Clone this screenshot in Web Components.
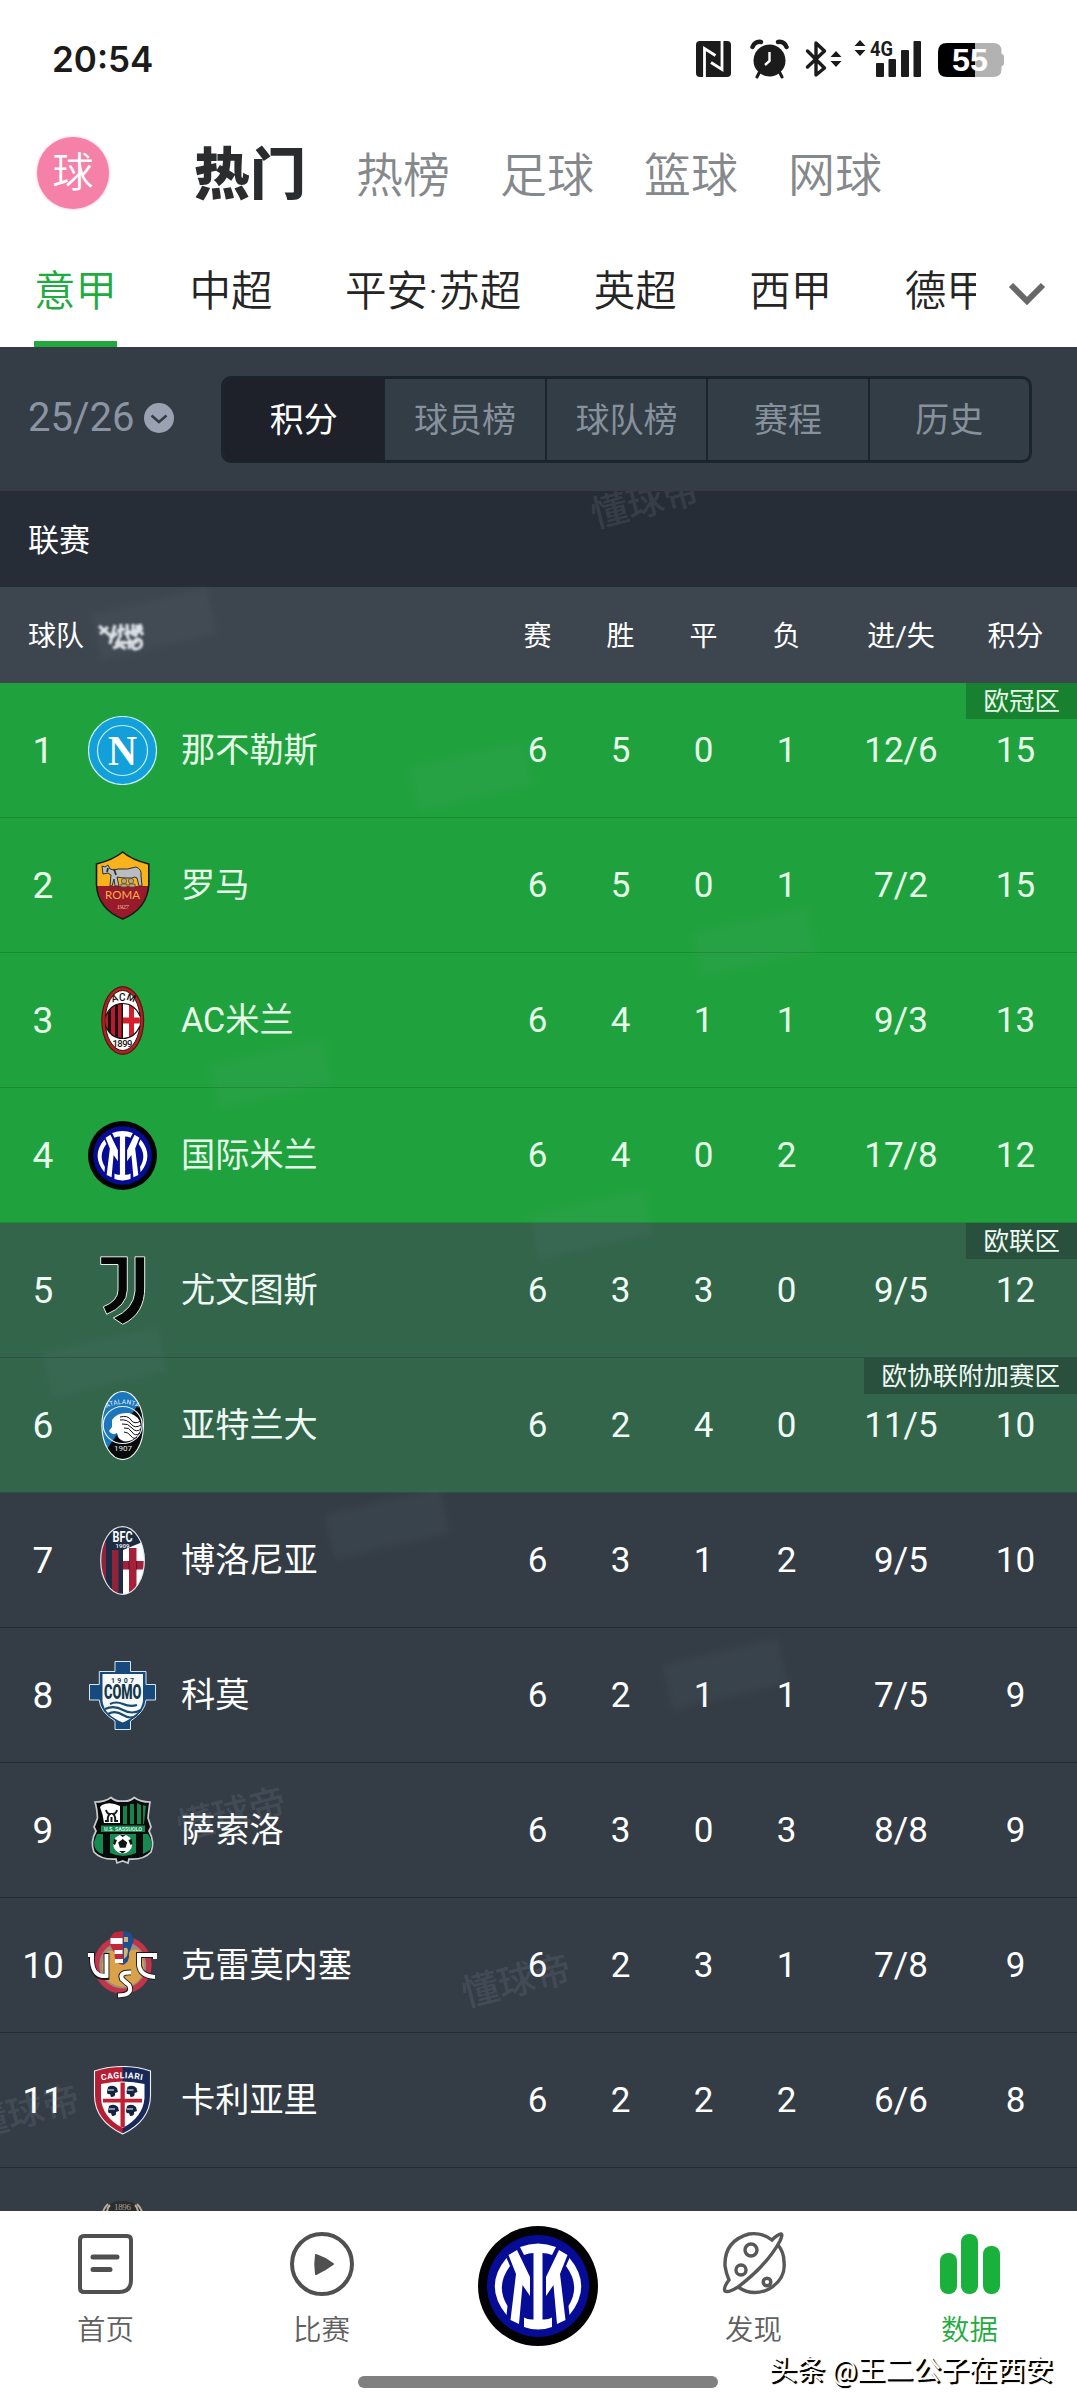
<!DOCTYPE html>
<html lang="zh-CN">
<head>
<meta charset="UTF-8">
<title>数据</title>
<style>
  body {
    margin: 0;
    background: #fff;
    font-family: Roboto, "Noto Sans CJK SC", sans-serif;
  }
</style>
</head>
<body>
<score-app></score-app>

<script>
  const INTER = `
    <circle cx="60" cy="60" r="60" fill="#020204"/>
    <circle cx="60" cy="60" r="51" fill="#070c96"/>
    <g fill="#fff">
      <path d="M42 21Q60 14 78 21L74 29Q69 27 64.5 27V93.500Q70 94 74 91.500V101Q60 106 46 101V91.500Q50 94 55.500 93.500V27Q51 27 46 29Z"/>
      <path d="M30.500 29L39 24L52 51V70L44.500 59L41 98L32.500 94L38 48Z"/>
      <path d="M89.500 29L81 24L68 51V70L75.500 59L79 98L87.500 94L82 48Z"/>
      <path d="M28.500 32Q5 60 28.500 89L29.500 80Q17 60 32 40Z"/>
      <path d="M91.500 32Q115 60 91.500 89L90.500 80Q103 60 88 40Z"/>
    </g>`;

  const CRESTS = {
    napoli: `
      <circle cx="34.500" cy="34.500" r="34" fill="#129fda" stroke="#c4f3f4" stroke-width="1.200"/>
      <circle cx="34.500" cy="34.500" r="25" fill="none" stroke="#c4f3f4" stroke-width="1.200"/>
      <text x="20" y="48.500" font-family="Liberation Serif" font-weight="700" font-size="43" textLength="29" lengthAdjust="spacingAndGlyphs" fill="#fff">N</text>`,
    roma: `
      <defs><clipPath id="s"><path d="M34.700 1Q25 9 8.500 13V34Q10 58 34.700 68Q59 58 60.800 34V13Q44 9 34.700 1Z"/></clipPath></defs>
      <g clip-path="url(#s)">
        <path fill="#f8b21c" d="M0 0H69V35H0Z"/><path fill="#981b2c" d="M0 35H69V69H0Z"/>
      </g>
      <path d="M34.700 1Q25 9 8.500 13V34Q10 58 34.700 68Q59 58 60.800 34V13Q44 9 34.700 1Z" fill="none" stroke="#1b1a10" stroke-width="1.600"/>
      <path d="M14 15L17 16L20 14L22 18Q26 20 30 18Q40 19 48 16Q54 18 53 25L54 35H51L49 27Q47 25 44 27L39 27Q33 27 29 26L31 35H27L26 28L24 35H22L23 24L20 22L15 23Z" fill="#b9bcc0" stroke="#2b2f35" stroke-width="1"/>
      <path d="M26 18L28 24M20 17L19 21" stroke="#2b2f35" stroke-width="1.800"/>
      <g fill="#b9a98b" stroke="#57472f" stroke-width=".8"><circle cx="36" cy="30" r="2.600"/><circle cx="43" cy="30" r="2.600"/><path d="M33 33h6v3h-6zM41 33h6v3h-6z"/></g>
      <text x="17" y="48" font-family="Lato" font-size="10.500" textLength="35" lengthAdjust="spacingAndGlyphs" fill="#f9b04a">ROMA</text>
      <text x="28.500" y="58" font-family="Liberation Serif" font-size="7" textLength="12.500" fill="#f0b9a0">1927</text>`,
    milan: `
      <ellipse cx="34.700" cy="34.500" rx="21.500" ry="34.500" fill="#4f1712"/>
      <ellipse cx="34.700" cy="34.500" rx="20.300" ry="33.200" fill="#b3201f"/>
      <ellipse cx="34.700" cy="34.500" rx="17.500" ry="30" fill="#fff" stroke="#2b1512"/>
      <defs><clipPath id="s"><ellipse cx="34.700" cy="35" rx="17.300" ry="17.500"/></clipPath></defs>
      <g clip-path="url(#s)">
        <path fill="#1c1012" d="M15 15H35V55H15Z"/>
        <path fill="#b41e2c" d="M17 15h3v40h-3zM23 15h4v40h-4zM30 15h3.500v40h-3.500z"/>
        <path fill="#fff" d="M35 15H55V55H35Z"/>
        <path fill="#d31f2c" d="M41 15h5v40h-5zM35 31.500h20v6h-20z"/>
      </g>
      <path d="M17.500 30Q23 17.500 34.700 17.500T52 30M17.500 40Q23 52.500 34.700 52.500T52 40" fill="none" stroke="#16100f" stroke-width="1.200"/>
      <g font-family="Roboto" font-weight="500" fill="#16100f">
        <text font-size="10" transform="translate(24.500 16.500) rotate(-20)">A</text>
        <text x="31" y="14.500" font-size="10">C</text>
        <text font-size="10" transform="translate(38 13.500) rotate(20)">M</text>
        <text font-size="9.500" x="24.500" y="60.500" textLength="20">1899</text>
      </g>`,
    inter: `<g transform="scale(.575)">${INTER}</g>`,
    juventus: `
      <g fill="#050706" stroke="#e8f2ec" stroke-width="1">
        <path d="M12.700 .800H39.300V34Q39 50 18.700 58.300L15.300 50.700Q30 45 30 34V8.500H12.700Z"/>
        <path d="M47 .800H56.700V31Q57 58 34.700 68.300L25.300 62Q46 53 47 35Z"/>
      </g>`,
    atalanta: `
      <defs><clipPath id="s"><ellipse cx="34.700" cy="34.500" rx="21" ry="34"/></clipPath></defs>
      <g clip-path="url(#s)">
        <path fill="#1b76bb" d="M0 0H69V69H0Z"/><path fill="#08090b" d="M50 14L16 62V69H69V14Z"/>
      </g>
      <ellipse cx="34.700" cy="34.500" rx="20.800" ry="34" fill="none" stroke="#f2faf8" stroke-width="1.100"/>
      <ellipse cx="34.700" cy="34" rx="19.500" ry="18.500" fill="none" stroke="#e6f4fa" stroke-width="1.200"/>
      <path d="M24 29Q29 21 41 22Q52 25 53 35Q52 45 44 49Q35 53 30 46L29 42Q24 45 21 40L24 36Z" fill="#fff"/>
      <path d="M32 26Q40 24 43 29T53 30M32 29Q39 28 43 33T53 34M34 33Q40 32 44 37T53 38M36 37Q41 36 44 41T52 42M36 41Q40 41 43 45T49 46" fill="none" stroke="#111" stroke-width="1"/>
      <defs><path id="arc" d="M18.500 17Q34.700 9 51 17"/></defs>
      <text font-family="Roboto" font-size="6.500" fill="#e6f4fa"><textPath href="#arc" textLength="33">ATALANTA</textPath></text>
      <text x="26" y="60" font-family="Roboto" font-size="8" textLength="18" fill="#e8e8e8">1907</text>`,
    bologna: `
      <defs><clipPath id="s"><ellipse cx="34.500" cy="34.500" rx="22" ry="34"/></clipPath></defs>
      <g clip-path="url(#s)">
        <path fill="#1d2c42" d="M0 0H69V69H0Z"/>
        <path fill="#8f2339" d="M13 16h5v53h-5zM24 24h6.500v45h-6.500z"/>
        <path fill="#fff" d="M35 24L57 15V69H35Z"/>
        <path fill="#a52139" d="M41 22h7.500v47h-7.500zM35 35h22v8.500h-22z"/>
        <path d="M41 35v8.500M48.500 35v8.500" stroke="#3d1523" stroke-width=".8"/>
      </g>
      <ellipse cx="34.500" cy="34.500" rx="21.800" ry="33.900" fill="none" stroke="#dfe7ed" stroke-width="1.200"/>
      <text x="24.500" y="15.500" font-family="Roboto" font-weight="700" font-size="14" textLength="20" lengthAdjust="spacingAndGlyphs" fill="#fff">BFC</text>
      <text x="27.500" y="21.500" font-family="Roboto" font-weight="500" font-size="6" textLength="14" fill="#fff">1909</text>`,
    como: `
      <g fill="#174a7c" stroke="#d5e6ef" stroke-width="1">
        <path d="M27 .500H42.500V10.500H58V23.500H67.500V39H58Q57 51 42.500 60V68.500H27V60Q12 51 11.300 39H1.500V23.500H11.300V10.500H27Z"/>
      </g>
      <path d="M14.500 13H55V40Q53 54 34.700 61.500Q16 54 14.500 40Z" fill="#f6fafb"/>
      <text x="23" y="21.500" font-family="Roboto" font-weight="700" font-size="7" textLength="23" fill="#22384e">1907</text>
      <text x="16" y="38" font-family="Roboto" font-weight="900" font-size="19.500" textLength="37.500" lengthAdjust="spacingAndGlyphs" fill="#17384c">COMO</text>
      <path d="M22 43Q28 40 35 43T49 44M17 48Q26 44 35 49T53 49M20 53Q27 49 35 54T49 54" fill="none" stroke="#174a6c" stroke-width="2.200"/>`,
    sassuolo: `
      <path d="M7 6Q17 6 23 1.500Q28 6 34.700 5Q41 6 46.300 1.500Q52 6 62 6Q61 12 60 22L63 31L61 35Q67 46 63 56Q56 64 41 63L40 67L34.700 65L29 67L28 63Q13 64 6 56Q2 46 8 35L6 31L9.500 22Q9 12 7 6Z" fill="#080b0a" stroke="#c8ccd0" stroke-width="1.700"/>
      <path fill="#fff" d="M14 9Q22 5 32 10V27H16Q15 18 12 11Z"/>
      <path d="M18 14q1 4 4 4q-3 2-2 8M29 14q-1 4-4 4q3 2 2 8M17 25h3M27 25h3M23.500 21v5" fill="none" stroke="#15191a" stroke-width="2"/>
      <path fill="#15834e" d="M35 10q3 1 4-1v19h-4zM42 8h4v20h-4zM49 7l4 2v19h-4zM55 9l3 1-2 18h-1z"/>
      <path fill="#168a51" d="M13 29.500H57V36H13ZM22 38H48V57Q35 63 22 57ZM9 38h6v20Q6 56 6 46ZM55 38h5q6 9 2 16l-7 4z"/>
      <text x="16" y="35" font-family="Roboto" font-weight="700" font-size="5.500" textLength="38" fill="#d9f0e2">U.S. SASSUOLO</text>
      <circle cx="34.700" cy="48" r="9.500" fill="#fff"/>
      <path fill="#101412" d="M34.700 43l4.500 3.500-1.700 5.300h-5.600l-1.700-5.300zM26 43l3 1-2 5-2-1zM43.500 43l-3 1 2 5 2-1zM31 55l7 0-3.500 2.500zM32 39h5.500l-2.700 2z"/>`,
    cremonese: `
      <circle cx="34.700" cy="34" r="29" fill="#c2344a"/>
      <circle cx="34.700" cy="34" r="23.500" fill="#9f8a80"/>
      <path d="M20 20Q29 18 34.700 30Q41 16 50 19Q62 36 50 50Q34 62 19 49Q9 34 20 20Z" fill="#d9a24a"/>
      <path d="M26 1.500L35 0V34Q26 33 26.500 22L22.500 15V6Z" fill="#c2283c"/>
      <path d="M22.500 7h12v6h-12zM26.500 19h8v4h-8zM27 28h8v4h-8z" fill="#fff"/>
      <path d="M35 0L43 2L46 9L41 22Q42 31 35 34Z" fill="#1c4e91"/>
      <path d="M36 6h4v5h-4zM36 17q6-2 3 8l-3 3z" fill="#cbb573"/>
      <g fill="none" stroke="#171717" stroke-width="5.800">
        <path d="M0 24H4V30Q5 47 18.500 46V22M67 28V24H51V34Q52 45 67 46M43 41.500Q31 41 34 48Q37 51 41 54Q46 64 29 64.500"/>
      </g>
      <g fill="none" stroke="#fff" stroke-width="4">
        <path d="M0 24H4V30Q5 46 18.500 45V23M67 28V24H51V34Q52 45 67 46M43 41.500Q31 41 34 48Q37 51 41 54Q46 64 30 64.500"/>
      </g>`,
    cagliari: `
      <defs><clipPath id="s"><path d="M6.500 5Q20 .500 34.700 .500T62.500 5V30Q62 55 34.700 68Q7 55 6.500 30Z"/></clipPath></defs>
      <g clip-path="url(#s)"><path fill="#b51f36" d="M0 0H35V69H0Z"/><path fill="#16295a" d="M34.700 0H69V69H34.700Z"/></g>
      <path d="M6.500 5Q20 .500 34.700 .500T62.500 5V30Q62 55 34.700 68Q7 55 6.500 30Z" fill="none" stroke="#f1f3f4" stroke-width="1.100"/>
      <path d="M13 18Q34.700 13 56.500 18V32Q55 51 34.700 62Q14 51 13 32Z" fill="#fff"/>
      <path d="M32.500 16.500h4.300v45h-4.300zM15 32.700h39v3.800h-39z" fill="#c11f33"/>
      <g fill="#14233f">
        <path id="m" d="M20 21q5-3 9 1l1 4-3 1q1 4-4 4l-1-3q-3 1-3-2zM20 23l8-1"/>
        <use href="#m" x="19.500"/><use href="#m" x="1" y="19"/><use href="#m" x="19" y="19"/>
      </g>
      <path d="M20 24h6M39.500 24h6M21 43h6M39 43h6" stroke="#fff" stroke-width="1"/>
      <defs><path id="arc" d="M13.500 14.500Q34.700 10 56 14.500"/></defs>
      <text font-family="Roboto" font-weight="700" font-size="8.500" fill="#fff"><textPath href="#arc" textLength="41">CAGLIARI</textPath></text>`,
    udinese: `
      <ellipse cx="34.500" cy="18" rx="23" ry="18" fill="#2a2c2d"/>
      <path d="M15 11q1-4 5-8M19 11q0-4 3-7M54 11q-1-4-5-8M50 11q0-4-3-7" stroke="#b9ab98" stroke-width="2" fill="none"/>
      <text x="26" y="8.500" font-family="Liberation Serif" font-size="9" textLength="17" fill="#a59e92">1896</text>`
  };

  class TeamCrest extends HTMLElement {
    constructor() {
      super();
      this.attachShadow({ mode: "open" });
    }

    connectedCallback() {
      const team = this.getAttribute("team");
      this.shadowRoot.innerHTML = `
        <style>
          :host { display: block; width: 69px; height: 69px; }
          svg { display: block; width: 100%; height: 100%; }
        </style>
        <svg viewBox="0 0 69 69">${CRESTS[team] || ""}</svg>
      `;
    }
  }

  class StatusBar extends HTMLElement {
    constructor() {
      super();
      this.attachShadow({ mode: "open" });
    }

    connectedCallback() {
      this.shadowRoot.innerHTML = `
        <style>
          :host {
            display: flex;
            justify-content: space-between;
            align-items: center;
            height: 118px;
            padding: 0 72px 0 52px;
            box-sizing: border-box;
          }
          time {
            font: 600 35px/1 Inter, sans-serif;
            color: #1b1b1b;
          }
          svg { display: block; overflow: visible; }
        </style>
        <time>20:54</time>
        <svg width="310" height="50" viewBox="695 34 310 50" fill="#1b1b1b">
          <rect x="696" y="41" width="35" height="36" rx="4"/>
          <path d="M704.500 77V48.500L715.500 55.500M722 41V69.500L711 62.500" fill="none" stroke="#fff" stroke-width="2.800"/>

          <circle cx="769.500" cy="60.500" r="16"/>
          <path d="M752.500 47Q755 41 761 42M786.500 47Q784 41 778 42" fill="none" stroke="#1b1b1b" stroke-width="4.500" stroke-linecap="round"/>
          <path d="M759 73l-2 4M780 73l2 4" stroke="#1b1b1b" stroke-width="3" stroke-linecap="round"/>
          <path d="M769.500 52V61L765 65" fill="none" stroke="#fff" stroke-width="2.400"/>

          <path d="M807.500 51L824.500 68L816 75V43L824.500 51L807.500 67" fill="none" stroke="#1b1b1b" stroke-width="3.400" stroke-linejoin="round" stroke-linecap="round"/>
          <path d="M836 51l5.500 6h-11zM836 67l5.500-6h-11z"/>
          <path d="M860 40l5.500 6h-11zM860 56l5.500-6h-11z"/>
          <text x="870" y="56" font-family="Roboto" font-weight="700" font-size="20" textLength="23" lengthAdjust="spacingAndGlyphs">4G</text>
          <rect x="876" y="63" width="8" height="14" rx="1"/>
          <rect x="888.500" y="59" width="7.500" height="18" rx="1"/>
          <rect x="901" y="50" width="8" height="27" rx="1"/>
          <rect x="913.500" y="41" width="7.500" height="36" rx="1"/>

          <path d="M975 43H993Q1001.500 43 1001.500 51V54Q1004 54 1004 57V63Q1004 66 1001.500 66V69Q1001.500 77 993 77H975Z" fill="#b2b2b2"/>
          <path d="M975 43H947Q938 43 938 52V68Q938 77 947 77H975Z" fill="#000"/>
          <text x="952" y="71" font-family="Liberation Sans" font-weight="700" font-size="30.500" textLength="36" lengthAdjust="spacingAndGlyphs" fill="#fff">55</text>
        </svg>
      `;
    }
  }

  class ChannelNav extends HTMLElement {
    constructor() {
      super();
      this.attachShadow({ mode: "open" });
    }

    connectedCallback() {
      this.shadowRoot.innerHTML = `
        <style>
          :host {
            display: flex;
            align-items: center;
            height: 110px;
            padding-left: 37px;
          }
          .avatar {
            width: 72px;
            height: 72px;
            margin-right: 85px;
            border-radius: 50%;
            background: #f681a8;
            box-shadow: 0 0 3px #f9b5cb;
            color: #fff;
            font-size: 41px;
            font-weight: 350;
            line-height: 73px;
            text-align: center;
          }
          nav {
            display: flex;
            align-items: center;
            gap: 50px;
            padding-top: 4px;
            font-size: 47px;
            font-weight: 350;
            line-height: 1;
            color: #85898c;
          }
          b {
            font-size: 56px;
            font-weight: 900;
            color: #2b2c2e;
          }
        </style>
        <div class="avatar">球</div>
        <nav><b>热门</b><span>热榜</span><span>足球</span><span>篮球</span><span>网球</span></nav>
      `;
    }
  }

  class LeagueTabs extends HTMLElement {
    constructor() {
      super();
      this.attachShadow({ mode: "open" });
    }

    connectedCallback() {
      const items = this.getAttribute("items").split(",");
      this.shadowRoot.innerHTML = `
        <style>
          :host {
            display: flex;
            align-items: stretch;
            height: 119px;
            padding-left: 34px;
          }
          .list {
            display: flex;
            flex: none;
            gap: 72.500px;
            width: 942px;
            overflow: hidden;
            white-space: nowrap;
            font-size: 41.500px;
            font-weight: 350;
            line-height: 128px;
            color: #252525;
          }
          span { flex: none; height: 113px; }
          .active {
            color: #1fab40;
            border-bottom: 6px solid #22a83f;
          }
          svg { margin: 50px 0 0 31px; }
        </style>
        <div class="list">
          ${items.map((t, i) => `<span class="${i === 0 ? "active" : ""}">${t}</span>`).join("")}
        </div>
        <svg width="40" height="30" viewBox="0 0 40 30"><path d="M4 7L20 23L36 7" fill="none" stroke="#686868" stroke-width="6"/></svg>
      `;
    }
  }

  class FilterBar extends HTMLElement {
    constructor() {
      super();
      this.attachShadow({ mode: "open" });
    }

    connectedCallback() {
      const items = this.getAttribute("items").split(",");
      this.shadowRoot.innerHTML = `
        <style>
          :host {
            display: flex;
            align-items: center;
            justify-content: space-between;
            height: 144px;
            padding: 0 45px 0 28px;
            background: #343d46;
          }
          .season {
            display: flex;
            align-items: center;
            gap: 10px;
            margin-bottom: 2px;
            font-size: 40px;
            line-height: 1;
            color: #8b94a3;
          }
          .seg {
            display: flex;
            box-sizing: border-box;
            width: 811px;
            height: 87px;
            border: 3px solid #1b242c;
            border-radius: 10px;
            overflow: hidden;
            background: #323d45;
            font-size: 34px;
            line-height: 83px;
            text-align: center;
            color: #86919d;
          }
          .seg span {
            flex: 1;
            border-left: 2px solid #1b242c;
          }
          .seg .active {
            background: #1e2129;
            border: 0;
            color: #fff;
          }
        </style>
        <div class="season">
          <slot></slot>
          <svg width="30" height="30" viewBox="0 0 30 30"><circle cx="15" cy="15" r="15" fill="#9aa1b3"/><path d="M7.500 12.500L15 19L22.500 12.500" fill="none" stroke="#343d46" stroke-width="2.600"/></svg>
        </div>
        <div class="seg">
          ${items.map((t, i) => `<span class="${i === 0 ? "active" : ""}">${t}</span>`).join("")}
        </div>
      `;
    }
  }

  class TeamRow extends HTMLElement {
    constructor() {
      super();
      this.attachShadow({ mode: "open" });
    }

    connectedCallback() {
      const zone = this.getAttribute("zone");
      const stats = (this.getAttribute("stats") || "").split(",");
      this.shadowRoot.innerHTML = `
        <style>
          :host {
            display: grid;
            grid-template-columns: var(--cols);
            align-items: center;
            position: relative;
            box-sizing: border-box;
            height: 135px;
            padding-right: 20px;
            border-bottom: 1px solid #222b33;
            background: #343d46;
            color: #fff;
            font-size: 35px;
            line-height: 1;
            text-align: center;
          }
          :host([level="ucl"]) { background: #1fa23d; border-color: #1a8b35; color: #e6fce9; }
          :host([level="uel"]) { background: #33654b; border-color: #2a503f; color: #effaf4; }
          .rank { font-size: 37px; }
          team-crest { justify-self: center; }
          .name {
            padding: 1px 0 0 22px;
            font-size: 34.200px;
            text-align: left;
          }
          .zone {
            position: absolute;
            top: 0;
            right: 0;
            padding: 1px 17px 0;
            background: rgba(0, 0, 0, .2);
            font-size: 25.500px;
            line-height: 35px;
          }
        </style>
        <span class="rank">${this.getAttribute("rank") || ""}</span>
        <team-crest team="${this.getAttribute("crest")}"></team-crest>
        <span class="name">${this.getAttribute("name") || ""}</span>
        ${stats.map(s => `<span>${s}</span>`).join("")}
        ${zone ? `<div class="zone">${zone}</div>` : ""}
      `;
    }
  }

  const TEAMS = [
    ["napoli", "那不勒斯", "6,5,0,1,12/6,15", "ucl", "欧冠区"],
    ["roma", "罗马", "6,5,0,1,7/2,15", "ucl"],
    ["milan", "AC米兰", "6,4,1,1,9/3,13", "ucl"],
    ["inter", "国际米兰", "6,4,0,2,17/8,12", "ucl"],
    ["juventus", "尤文图斯", "6,3,3,0,9/5,12", "uel", "欧联区"],
    ["atalanta", "亚特兰大", "6,2,4,0,11/5,10", "uel", "欧协联附加赛区"],
    ["bologna", "博洛尼亚", "6,3,1,2,9/5,10"],
    ["como", "科莫", "6,2,1,1,7/5,9"],
    ["sassuolo", "萨索洛", "6,3,0,3,8/8,9"],
    ["cremonese", "克雷莫内塞", "6,2,3,1,7/8,9"],
    ["cagliari", "卡利亚里", "6,2,2,2,6/6,8"]
  ];

  // faint marks printed over the table: [left, top] from the table's corner
  const MARKS = [[590, -7], [176, 1305], [461, 1472], [-30, 1603]];
  const PATCHES = [[95, 110], [412, 262], [695, 428], [212, 560], [532, 710], [46, 848], [328, 1010], [666, 1160]];

  class StandingsTable extends HTMLElement {
    constructor() {
      super();
      this.attachShadow({ mode: "open" });
    }

    connectedCallback() {
      const heads = ["赛", "胜", "平", "负", "进/失", "积分"];
      this.shadowRoot.innerHTML = `
        <style>
          :host {
            --cols: 86px 73px 1fr 83px 83px 83px 83px 146px 83px;
            display: block;
            position: relative;
            height: 1720px;
            overflow: hidden;
            background: #343d46;
          }
          .group {
            height: 96px;
            padding-left: 28px;
            background: #272d36;
            font-size: 31px;
            line-height: 100px;
            color: #fff;
          }
          .head {
            display: grid;
            grid-template-columns: var(--cols);
            align-items: center;
            box-sizing: border-box;
            height: 96px;
            padding: 4px 20px 0 0;
            background: #3d464f;
            font-size: 28px;
            line-height: 1;
            text-align: center;
            color: #fff;
          }
          .team {
            grid-column: 1 / 4;
            display: flex;
            align-items: center;
            gap: 14px;
            padding-left: 28px;
          }
          .mark {
            position: absolute;
            font-size: 37px;
            font-weight: 500;
            line-height: 1;
            color: rgba(170, 180, 190, .15);
            transform: rotate(-14deg);
          }
          .patch {
            position: absolute;
            width: 118px;
            height: 46px;
            background: rgba(130, 140, 150, .07);
            filter: blur(3px);
            transform: rotate(-13deg);
          }
        </style>
        <div class="group">联赛</div>
        <div class="head">
          <div class="team">
            球队
            <svg width="48" height="30" viewBox="0 0 48 30" fill="none" stroke="#e3e8ec" stroke-width="3.200" style="filter: blur(1px)">
              <path d="M1 4L14 15M2 12L10 5M17 3L12 22M12 17L19 11M23 2L22 16M19 9L27 7M29 2L30 17M26 12L45 6M35 2V14M43 2L37 15M38 3L45 13M15 26L26 22M21 16L18 26M26 19Q21 26 28 26M32 17L31 27M37 18Q32 27 38 27Q45 26 43 19Q39 15 36 20M17 21L40 20"/>
            </svg>
          </div>
          ${heads.map(h => `<span>${h}</span>`).join("")}
        </div>
        ${TEAMS.map(([crest, name, stats, level, zone], i) => `
          <team-row rank="${i + 1}" crest="${crest}" name="${name}" stats="${stats}" level="${level || ""}" zone="${zone || ""}"></team-row>
        `).join("")}
        <team-row crest="udinese"></team-row>
        ${PATCHES.map(([x, y]) => `<div class="patch" style="left:${x}px;top:${y}px"></div>`).join("")}
        ${MARKS.map(([x, y]) => `<div class="mark" style="left:${x}px;top:${y}px">懂球帝</div>`).join("")}
      `;
    }
  }

  class TabItem extends HTMLElement {
    constructor() {
      super();
      this.attachShadow({ mode: "open" });
    }

    connectedCallback() {
      this.shadowRoot.innerHTML = `
        <style>
          :host {
            display: flex;
            flex-direction: column;
            align-items: center;
            flex: none;
            width: 216px;
            padding-top: 19px;
            box-sizing: border-box;
            font-size: 28.500px;
            font-weight: 350;
            line-height: 1;
            color: #606060;
          }
          :host([active]) { color: #1fab3e; }
          .label { margin-top: 19px; }
        </style>
        <slot name="icon"></slot>
        <span class="label"><slot></slot></span>
      `;
    }
  }

  class BottomNav extends HTMLElement {
    constructor() {
      super();
      this.attachShadow({ mode: "open" });
    }

    connectedCallback() {
      this.shadowRoot.innerHTML = `
        <style>
          :host {
            display: flex;
            flex-direction: column;
            align-items: center;
            position: relative;
            height: 196px;
            background: #fff;
          }
          .tabs {
            display: flex;
            justify-content: center;
            width: 1077px;
            height: 165px;
            margin-left: -2px;
          }
          .club { flex: none; width: 216px; padding-top: 15px; }
          .club svg { display: block; margin: 0 auto; }
          .bar {
            width: 360px;
            height: 12px;
            margin-left: -1px;
            border-radius: 6px;
            background: #808080;
          }
          .author {
            position: absolute;
            right: 24px;
            top: 146px;
            font-size: 28px;
            line-height: 1;
            white-space: nowrap;
            color: #fff;
            text-shadow: 1.500px 1.500px 0 #000, 2px 2px 1px #000;
          }
        </style>
        <div class="tabs">
          <tab-item>
            <svg slot="icon" width="66" height="68" viewBox="0 0 66 68" fill="none" stroke="#505050" stroke-width="4">
              <path d="M11 6H54Q58 6 58 10V50Q58 62 46 62H11Q7 62 7 58V10Q7 6 11 6Z"/>
              <path d="M20 27H44M20 39.500H37" stroke-width="5" stroke-linecap="round"/>
            </svg>
            首页
          </tab-item>
          <tab-item>
            <svg slot="icon" width="66" height="68" viewBox="0 0 66 68">
              <circle cx="33" cy="34" r="30" fill="none" stroke="#505050" stroke-width="4"/>
              <path d="M27 25Q36 28 44 34Q36 40 27 44Q25.500 34 27 25Z" fill="#505050" stroke="#505050" stroke-width="2" stroke-linejoin="round"/>
            </svg>
            比赛
          </tab-item>
          <div class="club"><svg width="120" height="120" viewBox="0 0 120 120">${INTER}</svg></div>
          <tab-item>
            <svg slot="icon" width="66" height="68" viewBox="0 0 66 68" fill="none" stroke="#585858" stroke-width="3.400">
              <path d="M51 10Q41 2 28 4Q3 11 4 36Q5 43 8 50Q2 58 4 61Q7 63 17 57Q46 35 59 11Q62 4 60 4Q57 4 51 10ZM17 57Q32 67 48 59Q65 49 63 32Q63 22 57 15"/>
              <circle cx="30" cy="20" r="6"/>
              <circle cx="20" cy="40" r="5"/>
              <circle cx="46" cy="52" r="3.800"/>
            </svg>
            发现
          </tab-item>
          <tab-item active>
            <svg slot="icon" width="66" height="68" viewBox="0 0 66 68" fill="#1ab03c">
              <rect x="3" y="23" width="17" height="41" rx="8"/>
              <rect x="24" y="4" width="17" height="60" rx="8"/>
              <rect x="46" y="16" width="17" height="48" rx="8"/>
            </svg>
            数据
          </tab-item>
        </div>
        <div class="bar"></div>
        <div class="author">头条 @王二公子在西安</div>
      `;
    }
  }

  class ScoreApp extends HTMLElement {
    constructor() {
      super();
      this.attachShadow({ mode: "open" });
    }

    connectedCallback() {
      this.shadowRoot.innerHTML = `
        <style>
          :host {
            display: block;
            width: 1077px;
            height: 2407px;
            overflow: hidden;
          }
        </style>
        <status-bar></status-bar>
        <channel-nav></channel-nav>
        <league-tabs items="意甲,中超,平安·苏超,英超,西甲,德甲"></league-tabs>
        <filter-bar items="积分,球员榜,球队榜,赛程,历史">25/26</filter-bar>
        <standings-table></standings-table>
        <bottom-nav></bottom-nav>
      `;
    }
  }

  customElements.define("team-crest", TeamCrest);
  customElements.define("status-bar", StatusBar);
  customElements.define("channel-nav", ChannelNav);
  customElements.define("league-tabs", LeagueTabs);
  customElements.define("filter-bar", FilterBar);
  customElements.define("team-row", TeamRow);
  customElements.define("standings-table", StandingsTable);
  customElements.define("tab-item", TabItem);
  customElements.define("bottom-nav", BottomNav);
  customElements.define("score-app", ScoreApp);
</script>
</body>
</html>
